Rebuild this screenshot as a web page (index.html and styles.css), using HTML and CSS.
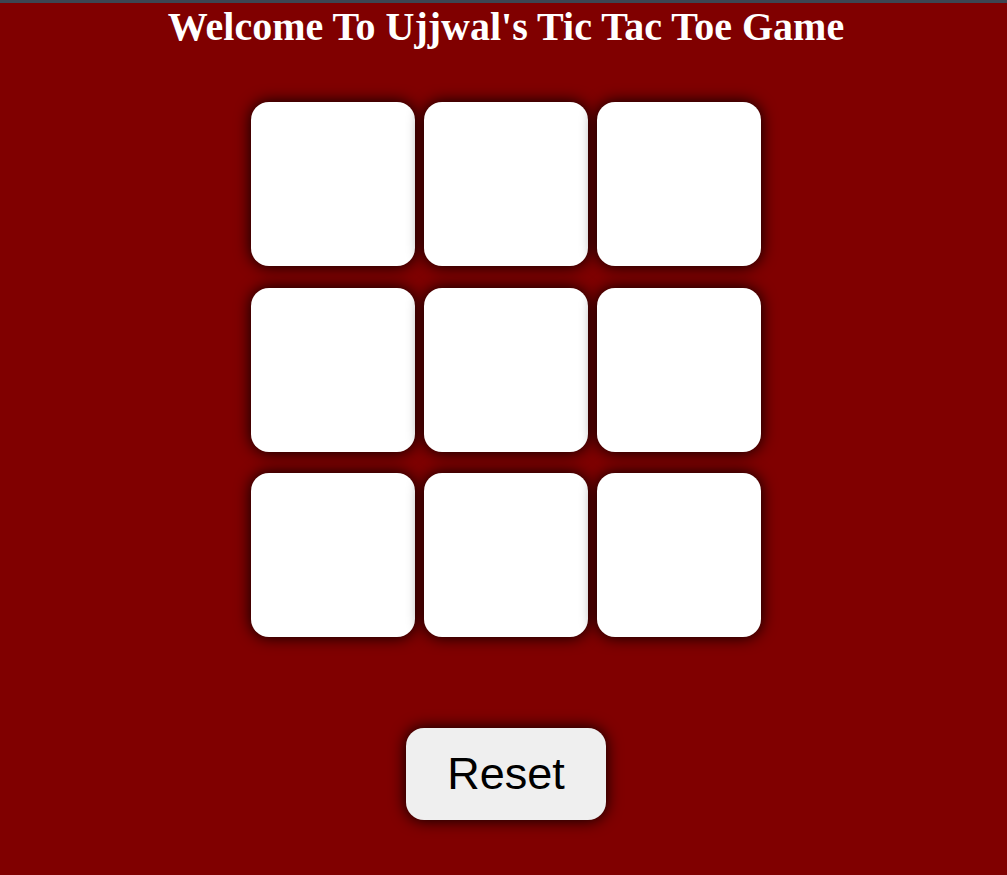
FILE: index.html
```html
<!DOCTYPE html>
<html>
  <head>
    <meta charset="UTF-8">
    <meta name="viewport" content="width=device-width, initial-scale=1.0">
    <title>Tic Tac Toe</title>
    <link rel="stylesheet" href="styles.css">
  </head>
  <body>
    <h1 class="title">Welcome To Ujjwal's Tic Tac Toe Game</h1>

    <main class="container">
      <div class="game">
        <button class="box"></button>
        <button class="box"></button>
        <button class="box"></button>
        <button class="box"></button>
        <button class="box"></button>
        <button class="box"></button>
        <button class="box"></button>
        <button class="box"></button>
        <button class="box"></button>
      </div>
    </main>

    <div class="controls">
      <button id="reset-btn">Reset</button>
    </div>
  </body>
</html>
```

FILE: styles.css
```css
* {
  margin: 0;
  padding: 0;
  box-sizing: border-box;
}

body {
  background-color: #800000;
  border-top: 3px solid #3d4652;
  padding-left: 5px;
  min-height: 100vh;
}

.title {
  color: #ffffff;
  font-family: "Liberation Serif", "Times New Roman", serif;
  font-size: 40px;
  line-height: 46px;
  font-weight: bold;
  text-align: center;
  padding-top: 1px;
}

.container {
  display: flex;
  justify-content: center;
  padding-top: 52px;
}

.game {
  display: grid;
  grid-template-columns: repeat(3, 164px);
  grid-auto-rows: 164px;
  column-gap: 9px;
  row-gap: 21.5px;
}

.box {
  border: none;
  border-radius: 18px;
  background-color: #ffffff;
  box-shadow: 0 0 1rem #000000;
}

.controls {
  display: flex;
  justify-content: center;
  padding-top: 91px;
}

#reset-btn {
  font-family: "Liberation Sans", Arial, sans-serif;
  font-size: 45px;
  line-height: 52px;
  padding: 20px 41px;
  border: none;
  border-radius: 18px;
  background-color: #efefef;
  color: #000000;
  box-shadow: 0 0 1rem #000000;
}
```
